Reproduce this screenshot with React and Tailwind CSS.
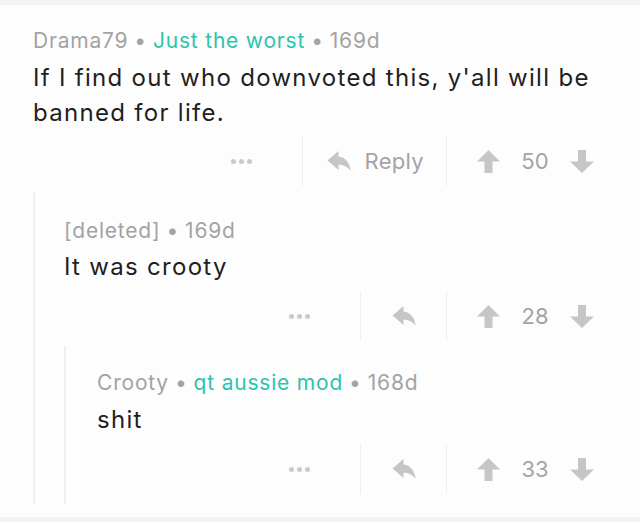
import React from "react";

const FONT = { fontFamily: "Inter, 'Noto Sans', 'Liberation Sans', sans-serif" };

function Dots() {
  return (
    <div className="flex items-center gap-[3px]">
      <span className="w-[5px] h-[5px] rounded-full bg-[#cacaca]" />
      <span className="w-[5px] h-[5px] rounded-full bg-[#cacaca]" />
      <span className="w-[5px] h-[5px] rounded-full bg-[#cacaca]" />
    </div>
  );
}

function ReplyIcon() {
  return (
    <svg width="24" height="20" viewBox="0 0 24 20" fill="#c6c6c6">
      <path d="M11.5 0 L0.5 9.5 L11.5 19 L11.5 13.8 C16.2 13.6 20 15.4 23.5 19.5 C22.8 11.8 18.2 6.2 11.5 5.6 Z" />
    </svg>
  );
}

function ArrowUp() {
  return (
    <svg width="23" height="23" viewBox="0 0 23 23" fill="#c6c6c6">
      <polygon points="11.5,0 23,11.5 15.5,11.5 15.5,23 7.5,23 7.5,11.5 0,11.5" />
    </svg>
  );
}

function ArrowDown() {
  return (
    <svg width="24" height="23" viewBox="0 0 24 23" fill="#c6c6c6">
      <polygon points="8,0 16,0 16,11.5 24,11.5 12,23 0,11.5 8,11.5" />
    </svg>
  );
}

function Actions({ score, withText }) {
  return (
    <div className="flex justify-end h-[50px]">
      <div className="flex items-center pr-[50px]">
        <Dots />
      </div>
      <div
        className={
          withText
            ? "flex items-center border-l border-[#efefef] pl-[24px] pr-[22px] gap-[14px]"
            : "flex items-center border-l border-[#efefef] pl-[31px] pr-[30px]"
        }
      >
        <ReplyIcon />
        {withText && (
          <span className="text-[22px] leading-none text-[#a4a4a4] tracking-[0.3px]">Reply</span>
        )}
      </div>
      <div className="flex items-center border-l border-[#efefef] pl-[30px] pr-[46px]">
        <ArrowUp />
        <span className="w-[70px] text-center text-[22px] leading-none text-[#a4a4a4]">{score}</span>
        <ArrowDown />
      </div>
    </div>
  );
}

function Meta({ user, flair, age }) {
  return (
    <div className="text-[21px] leading-[28px] text-[#a3a3a3] tracking-[0.8px]">
      {user}
      <span className="mx-[6px]">•</span>
      {flair && (
        <>
          <span className="text-[#2ec3ae]">{flair}</span>
          <span className="mx-[6px]">•</span>
        </>
      )}
      {age}
    </div>
  );
}

export default function App() {
  return (
    <div className="w-[640px] h-[522px] bg-[#fdfdfd] flex flex-col overflow-hidden" style={FONT}>
      <div className="h-[5px] bg-[#f3f3f3]" />
      <div className="flex-1 pl-[33px] pt-[22px]">
        <Meta user="Drama79" flair="Just the worst" age="169d" />
        <p className="mt-[5px] text-[24px] leading-[35px] text-[#1f1f1f] tracking-[1.3px]">
          If I find out who downvoted this, y'all will be banned for life.
        </p>
        <div className="mt-[6px]">
          <Actions score="50" withText />
        </div>

        {/* reply level 1 */}
        <div className="mt-[6px] border-l-2 border-[#efefef] pl-[29px] pt-[25px]">
          <Meta user="[deleted]" age="169d" />
          <p className="mt-[4px] text-[24px] leading-[35px] text-[#1f1f1f] tracking-[1.3px]">It was crooty</p>
          <div className="mt-[7px]">
            <Actions score="28" />
          </div>

          {/* reply level 2 */}
          <div className="mt-[5px] border-l-2 border-[#efefef] pl-[31px] pt-[23px] pb-[10px]">
            <Meta user="Crooty" flair="qt aussie mod" age="168d" />
            <p className="mt-[5px] text-[24px] leading-[35px] text-[#1f1f1f] tracking-[1.3px]">shit</p>
            <div className="mt-[7px]">
              <Actions score="33" />
            </div>
          </div>
        </div>
      </div>
      <div className="h-[5px] bg-[#f3f3f3]" />
    </div>
  );
}
